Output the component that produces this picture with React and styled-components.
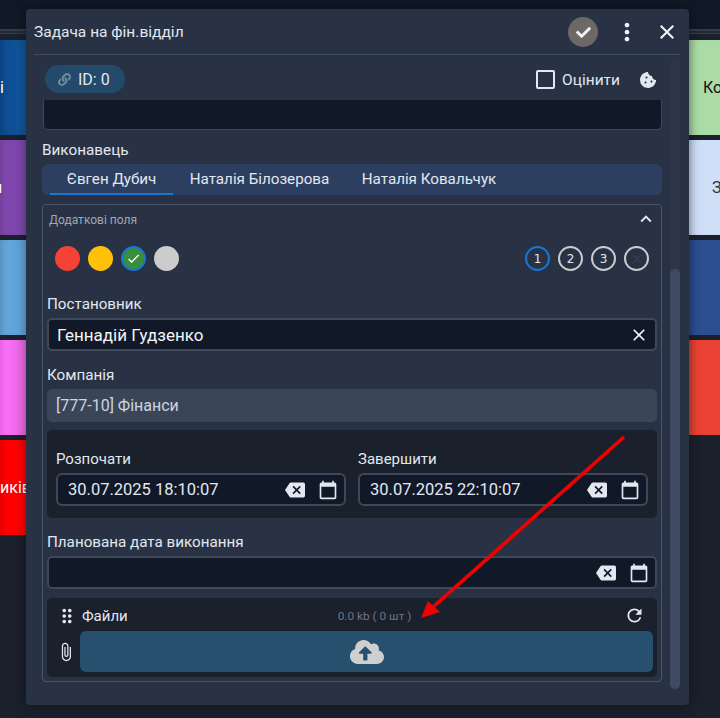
import { createGlobalStyle, styled } from "styled-components";
import {
  MdBackspace,
  MdCalendarToday,
  MdCheck,
  MdClose,
  MdMoreVert,
  MdRefresh,
  MdAttachFile,
  MdDragIndicator,
  MdExpandLess,
} from "react-icons/md";
import { FaCookieBite, FaCloudUploadAlt, FaLink, FaCheck } from "react-icons/fa";

const GlobalStyle = createGlobalStyle`
  html, body {
    margin: 0;
    padding: 0;
    background: #1a202c;
    overflow: hidden;
    font-family: Roboto, "Noto Sans", sans-serif;
  }
  * { box-sizing: border-box; }
`;

const leftCards = [
  { color: "linear-gradient(90deg,#0d4a8f,#11589f)", text: "і", fg: "#fff" },
  { color: "#7f47ad", text: "и", fg: "#fff", indent: -7 },
  { color: "#63a4da", text: "", fg: "#fff" },
  { color: "linear-gradient(90deg,#ff70ff,#e868e0)", text: "", fg: "#fff" },
  { color: "#ff0000", text: "иків", fg: "#fff" },
];

const rightCards = [
  { color: "#acdca6", text: "Ко", fg: "#111", pad: 14 },
  { color: "#cfdff7", text: "З", fg: "#333", pad: 23 },
  { color: "#2c4f90", text: "", fg: "#fff" },
  { color: "#ea4335", text: "", fg: "#fff" },
];

export default function App() {
  return (
    <>
      <GlobalStyle />
      <Board>
        <TopStrip />
        <StripRule />
        <Columns>
          <LeftColumn>
            {leftCards.map((c, i) => (
              <Card key={i} $bg={c.color} $fg={c.fg} $indent={c.indent}>
                {c.text}
              </Card>
            ))}
          </LeftColumn>
          <RightColumn>
            {rightCards.map((c, i) => (
              <Card key={i} $bg={c.color} $fg={c.fg} $pad={c.pad}>
                {c.text}
              </Card>
            ))}
          </RightColumn>
        </Columns>
      </Board>

      <Modal>
        <Header>
          <Title>Задача на фін.відділ</Title>
          <DoneButton>
            <FaCheck size={15} />
          </DoneButton>
          <HeaderIcon>
            <MdMoreVert size={28} />
          </HeaderIcon>
          <HeaderIcon>
            <MdClose size={24} />
          </HeaderIcon>
        </Header>

        <BodyWrap>
          <Body>
            <TopRow>
              <IdPill>
                <FaLink size={13} color="#6f8ba3" />
                ID: 0
              </IdPill>
              <RateBox>
                <CheckBox />
                Оцінити
                <CookieIcon size={16} color="#e2e8f0" />
              </RateBox>
            </TopRow>

            <ClippedInput />

            <TabLabel>Виконавець</TabLabel>
            <Tabs>
              <Tab $active $w={123}>Євген Дубич</Tab>
              <Tab $w={173}>Наталія Білозерова</Tab>
              <Tab $w={166}>Наталія Ковальчук</Tab>
            </Tabs>

            <Group>
              <GroupHead>
                <GroupTitle>Додаткові поля</GroupTitle>
                <MdExpandLess size={22} color="#e2e8f0" />
              </GroupHead>

              <MarksRow>
                <Dots>
                  <ColorDot $bg="#f44336" />
                  <ColorDot $bg="#ffc107" />
                  <ColorDot $bg="#388e3c" $selected>
                    <MdCheck size={15} color="#fff" />
                  </ColorDot>
                  <ColorDot $bg="#cccccc" />
                </Dots>
                <Dots>
                  <NumDot $active>1</NumDot>
                  <NumDot>2</NumDot>
                  <NumDot>3</NumDot>
                  <NumDot>
                    <MdClose size={16} color="#343d4e" />
                  </NumDot>
                </Dots>
              </MarksRow>

              <FieldLabel>Постановник</FieldLabel>
              <Input>
                <InputText>Геннадій Гудзенко</InputText>
                <MdClose size={20} color="#f1f5f9" />
              </Input>

              <FieldLabel>Компанія</FieldLabel>
              <ReadOnly>[777-10] Фінанси</ReadOnly>

              <DatesPanel>
                <DateCol>
                  <DateLabel>Розпочати</DateLabel>
                  <DateInput>
                    <DateText>30.07.2025 18:10:07</DateText>
                    <PickerIcons />
                  </DateInput>
                </DateCol>
                <DateCol>
                  <DateLabel>Завершити</DateLabel>
                  <DateInput>
                    <DateText>30.07.2025 22:10:07</DateText>
                    <PickerIcons />
                  </DateInput>
                </DateCol>
              </DatesPanel>

              <FieldLabel>Планована дата виконання</FieldLabel>
              <Input>
                <InputText />
                <PickerIcons />
              </Input>

              <FilesPanel>
                <FilesHead>
                  <MdDragIndicator size={22} color="#e2e8f0" />
                  <FilesTitle>Файли</FilesTitle>
                  <FilesMeta>0.0 kb ( 0 шт )</FilesMeta>
                  <MdRefresh size={21} color="#e2e8f0" />
                </FilesHead>
                <FilesRow>
                  <MdAttachFile size={20} color="#e2e8f0" />
                  <UploadButton>
                    <FaCloudUploadAlt size={34} color="#cfcfcf" />
                  </UploadButton>
                </FilesRow>
              </FilesPanel>
            </Group>
          </Body>
          <ScrollTrack>
            <ScrollThumb />
          </ScrollTrack>
        </BodyWrap>
      </Modal>

      <Arrow viewBox="0 0 720 718">
        <line x1="624" y1="437" x2="433" y2="607" stroke="#f00000" strokeWidth="3.6" />
        <polygon points="421,618 428,601 440,612" fill="#f00000" />
      </Arrow>
    </>
  );
}

function PickerIcons() {
  return (
    <Pickers>
      <MdBackspace size={20} color="#e2e8f0" />
      <MdCalendarToday size={20} color="#e2e8f0" />
    </Pickers>
  );
}

const Board = styled.div`
  width: 720px;
  height: 718px;
  display: flex;
  flex-direction: column;
  background: #1a202c;
`;

const TopStrip = styled.div`
  height: 29px;
  background: #111827;
`;

const StripRule = styled.div`
  height: 5px;
  background: #232a37;
  border-top: 2px solid #353c4a;
  border-bottom: 1px solid #353c4a;
`;

const Columns = styled.div`
  display: flex;
  justify-content: space-between;
  padding-top: 6px;
`;

const LeftColumn = styled.div`
  width: 26px;
  display: flex;
  flex-direction: column;
  gap: 5px;
`;

const RightColumn = styled(LeftColumn)`
  width: 31px;
`;

const Card = styled.div`
  height: 95px;
  display: flex;
  align-items: center;
  padding-left: ${(p) => p.$pad ?? 0}px;
  text-indent: ${(p) => p.$indent ?? 0}px;
  background: ${(p) => p.$bg};
  color: ${(p) => p.$fg};
  font-size: 16px;
  white-space: nowrap;
  overflow: hidden;
  box-shadow: inset 5px 0 6px -4px rgba(0, 0, 0, 0.18);
`;

const Modal = styled.div`
  position: absolute;
  left: 26px;
  top: 9px;
  width: 663px;
  height: 696px;
  padding: 0 9px 0 8px;
  background: #283244;
  border-radius: 4px;
  display: flex;
  flex-direction: column;
  box-shadow: 0 0 12px rgba(0, 0, 0, 0.4);
`;

const Header = styled.div`
  height: 46px;
  flex: none;
  display: flex;
  align-items: center;
  gap: 14px;
  border-bottom: 1px solid #3f4a5e;
  padding: 1px 1px 0 0;
`;

const Title = styled.div`
  flex: 1;
  font-size: 15.5px;
  line-height: 22px;
  color: #e2e8f0;
`;

const DoneButton = styled.div`
  width: 30px;
  height: 30px;
  margin-right: 1px;
  border-radius: 50%;
  background: #6b6866;
  color: #f1f1f1;
  display: flex;
  align-items: center;
  justify-content: center;
`;

const HeaderIcon = styled.div`
  color: #f1f5f9;
  display: flex;
`;

const BodyWrap = styled.div`
  flex: 1;
  min-height: 0;
  display: flex;
`;

const Body = styled.div`
  width: 628px;
  flex: none;
`;

const TopRow = styled.div`
  height: 45px;
  display: flex;
  align-items: center;
  justify-content: space-between;
  padding: 10px 6px 7px 11px;
`;

const IdPill = styled.div`
  width: 80px;
  height: 28px;
  border-radius: 14px;
  background: #234a6b;
  color: #e2e8f0;
  font-size: 16px;
  display: flex;
  align-items: center;
  gap: 7px;
  padding-left: 13px;
`;

const RateBox = styled.div`
  display: flex;
  align-items: center;
  margin-top: 1px;
  font-size: 15.5px;
  color: #e2e8f0;
`;

const CheckBox = styled.span`
  width: 19px;
  height: 19px;
  border: 2px solid #e2e8f0;
  border-radius: 2px;
  margin-right: 7px;
`;

const CookieIcon = styled(FaCookieBite)`
  margin-left: 20px;
`;

const ClippedInput = styled.div`
  margin-left: 9px;
  width: 619px;
  height: 30px;
  background: #111827;
  border: 1px solid #3f4859;
  border-top: none;
  border-radius: 0 0 5px 5px;
`;

const TabLabel = styled.div`
  margin: 10px 0 4px 8px;
  font-size: 15.3px;
  line-height: 20px;
  color: #e2e8f0;
`;

const Tabs = styled.div`
  margin-left: 8px;
  width: 620px;
  height: 31px;
  border-radius: 6px;
  background: #2d3f60;
  display: flex;
  padding-left: 8px;
`;

const Tab = styled.div`
  width: ${(p) => p.$w}px;
  height: 31px;
  display: flex;
  align-items: center;
  justify-content: center;
  font-size: 15.2px;
  color: #e2e8f0;
  border-bottom: 2px solid ${(p) => (p.$active ? "#1976d2" : "transparent")};
`;

const Group = styled.div`
  margin: 9px 0 0 8px;
  width: 620px;
  height: 478px;
  border: 1px solid #4a5568;
  border-radius: 4px;
  padding: 0 4px;
`;

const GroupHead = styled.div`
  height: 28px;
  display: flex;
  align-items: center;
  justify-content: space-between;
  padding-left: 2px;
`;

const GroupTitle = styled.div`
  padding-top: 2px;
  font-size: 12px;
  color: #a0a7b2;
`;

const MarksRow = styled.div`
  height: 25px;
  margin: 13px 0 22px;
  display: flex;
  justify-content: space-between;
  padding: 0 8px;
`;

const Dots = styled.div`
  display: flex;
  gap: 8px;
`;

const ColorDot = styled.div`
  width: 25px;
  height: 25px;
  border-radius: 50%;
  background: ${(p) => p.$bg};
  border: ${(p) => (p.$selected ? "2px solid #1976d2" : "none")};
  display: flex;
  align-items: center;
  justify-content: center;
`;

const NumDot = styled.div`
  width: 25px;
  height: 25px;
  border-radius: 50%;
  border: 2px solid ${(p) => (p.$active ? "#1976d2" : "#cccccc")};
  color: #e2e8f0;
  font-family: "DejaVu Sans", sans-serif;
  font-size: 12px;
  display: flex;
  align-items: center;
  justify-content: center;
`;

const FieldLabel = styled.div`
  padding-top: 1px;
  margin-bottom: 4px;
  font-size: 15.2px;
  line-height: 20px;
  color: #e2e8f0;
`;

const Input = styled.div`
  height: 33px;
  margin-bottom: 13px;
  background: #111827;
  border: 2px solid #3f4859;
  border-radius: 5px;
  display: flex;
  align-items: center;
  justify-content: space-between;
  padding: 0 6px 0 8px;
`;

const InputText = styled.div`
  font-size: 17px;
  color: #f1f5f9;
`;

const ReadOnly = styled.div`
  height: 33px;
  background: #3b4558;
  border-radius: 5px;
  display: flex;
  align-items: center;
  padding-left: 9px;
  font-size: 16px;
  color: #cbd5e0;
`;

const DatesPanel = styled.div`
  margin: 8px 0 13px;
  height: 88px;
  background: #1a202c;
  border-radius: 5px;
  display: flex;
  gap: 12px;
  padding: 18px 9px 0;
`;

const DateCol = styled.div`
  flex: 1;
`;

const DateLabel = styled.div`
  padding-top: 1px;
  margin-bottom: 4px;
  font-size: 15px;
  line-height: 20px;
  color: #e2e8f0;
`;

const DateInput = styled.div`
  height: 33px;
  background: #111827;
  border: 2px solid #3f4859;
  border-radius: 6px;
  display: flex;
  align-items: center;
  justify-content: space-between;
  padding: 0 6px 0 10px;
`;

const DateText = styled.div`
  font-size: 16.5px;
  color: #e2e8f0;
`;

const Pickers = styled.div`
  display: flex;
  align-items: center;
  gap: 13px;
`;

const FilesPanel = styled.div`
  margin-top: -4px;
  height: 79px;
  background: #1a202c;
  border-radius: 5px;
  padding-right: 4px;
`;

const FilesHead = styled.div`
  height: 33px;
  display: flex;
  align-items: center;
  padding: 2px 8px 0 9px;
`;

const FilesTitle = styled.div`
  margin-left: 4px;
  font-size: 15px;
  color: #e2e8f0;
`;

const FilesMeta = styled.div`
  flex: 1;
  padding-left: 210px;
  font-size: 11.8px;
  color: #6f7682;
`;

const FilesRow = styled.div`
  display: flex;
  align-items: center;
  padding-left: 9px;
  gap: 4px;
`;

const UploadButton = styled.div`
  flex: 1;
  height: 41px;
  background: #27506e;
  border-radius: 6px;
  display: flex;
  align-items: center;
  justify-content: center;
`;

const ScrollTrack = styled.div`
  width: 10px;
  margin: 4px 0 15px 8px;
  background: #2d3648;
  border-radius: 5px;
  padding-top: 210px;
`;

const ScrollThumb = styled.div`
  height: 420px;
  background: #3f4a63;
  border-radius: 5px;
`;

const Arrow = styled.svg`
  position: absolute;
  left: 0;
  top: 0;
  width: 720px;
  height: 718px;
  pointer-events: none;
`;
